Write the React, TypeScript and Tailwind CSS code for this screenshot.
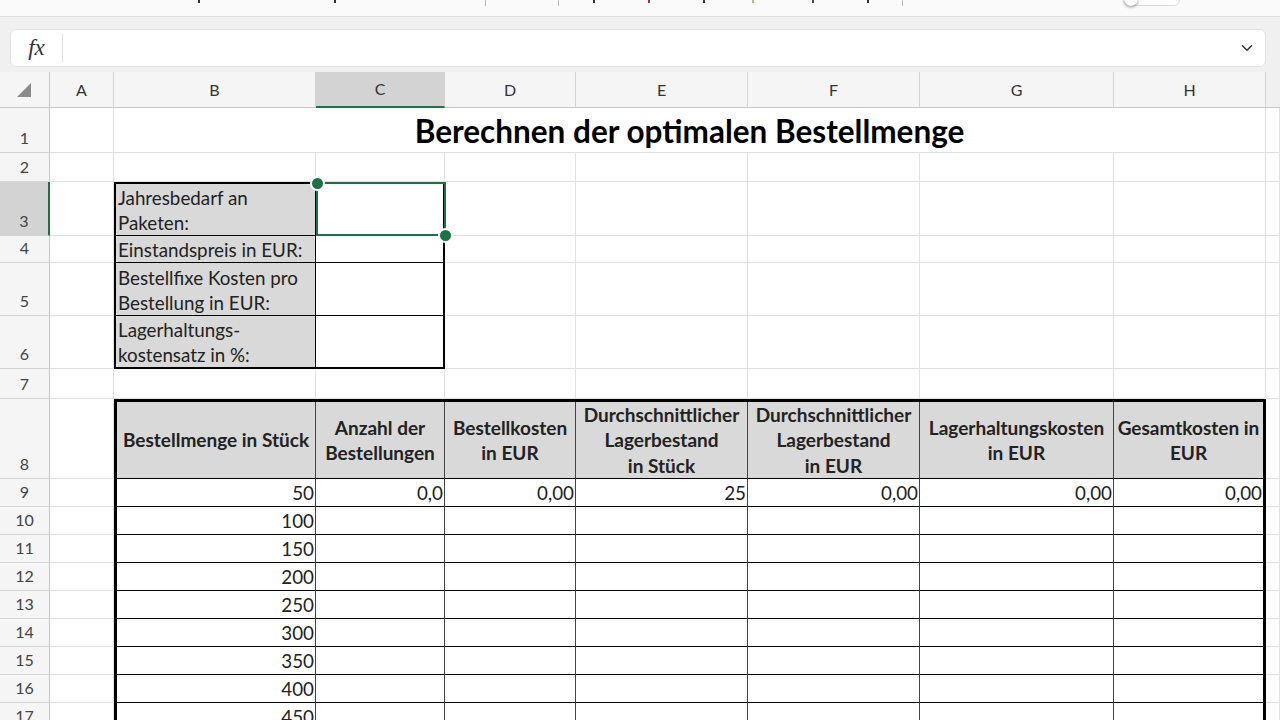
import { ChevronDown } from 'lucide-react';

const font = { fontFamily: 'Lato, "Open Sans", "Liberation Sans", sans-serif' };

const letters = ['A', 'B', 'C', 'D', 'E', 'F', 'G', 'H'];
const mengen = [50, 100, 150, 200, 250, 300, 350, 400, 450, 500, 550, 600];

const headers = [
  ['Bestellmenge in Stück'],
  ['Anzahl der', 'Bestellungen'],
  ['Bestellkosten', 'in EUR'],
  ['Durchschnittlicher', 'Lagerbestand', 'in Stück'],
  ['Durchschnittlicher', 'Lagerbestand', 'in EUR'],
  ['Lagerhaltungskosten', 'in EUR'],
  ['Gesamtkosten in', 'EUR'],
];

function RowHead({ n, active }: { n: number; active?: boolean }) {
  return (
    <div
      className={`flex items-end justify-center pb-[2px] text-[16px] text-[#444] border-b border-[#d4d4d4] ${
        active ? 'bg-[#d3d3d3] border-r-2 border-r-[#1e7145]' : 'bg-[#f5f5f5] border-r border-r-[#c8c8c8]'
      }`}
    >
      {n}
    </div>
  );
}

function Cell() {
  return <div className="border-r border-b border-[#e1e1e1] bg-white" />;
}

function Cells({ count }: { count: number }) {
  return (
    <>
      {Array.from({ length: count }).map((_, i) => (
        <Cell key={i} />
      ))}
    </>
  );
}

function InputBlock() {
  const labels = [
    ['Jahresbedarf an', 'Paketen:'],
    ['Einstandspreis in EUR:'],
    ['Bestellfixe Kosten pro', 'Bestellung in EUR:'],
    ['Lagerhaltungs-', 'kostensatz in %:'],
  ];
  return (
    <div className="row-span-4 col-span-2 border-2 border-black bg-white grid grid-cols-[200px_1fr] grid-rows-[52px_27px_53px_51px] text-[18.8px] text-[#222] leading-[25px]">
      {labels.map((l, i) => (
        <div key={i} className="contents">
          <div
            className={`bg-[#d9d9d9] border-r border-black pl-[2px] flex flex-col justify-end ${
              i < 3 ? 'border-b' : ''
            }`}
          >
            {l.map((t) => (
              <span key={t} className="whitespace-nowrap">
                {t}
              </span>
            ))}
          </div>
          <div className={`relative ${i < 3 ? 'border-b border-black' : ''}`}>
            {i === 0 && (
              <div className="absolute left-0 top-[-2px] right-[-3px] bottom-[-1px] border-2 border-[#1e7145]">
                <span className="absolute -left-[8.5px] -top-[8.5px] w-[15px] h-[15px] rounded-full bg-[#1e7145] border-2 border-white" />
                <span className="absolute -right-[8.5px] -bottom-[8.5px] w-[15px] h-[15px] rounded-full bg-[#1e7145] border-2 border-white" />
              </div>
            )}
          </div>
        </div>
      ))}
    </div>
  );
}

function MainTable() {
  const first = ['50', '0,0', '0,00', '25', '0,00', '0,00', '0,00'];
  return (
    <div className="row-span-13 col-span-7 border-[3px] border-b-0 border-black bg-white grid grid-cols-[199px_129px_131px_172px_172px_194px_1fr] grid-rows-[77px_repeat(12,28px)] text-[18.8px] text-[#222]">
      {headers.map((h, i) => (
        <div
          key={i}
          className={`bg-[#d9d9d9] border-b border-black flex flex-col items-center justify-center font-bold text-[19px] leading-[25.5px] text-center ${
            i < 6 ? 'border-r border-r-[#444]' : ''
          }`}
        >
          {h.map((t) => (
            <span key={t} className="whitespace-nowrap">
              {t}
            </span>
          ))}
        </div>
      ))}
      {mengen.map((m, r) =>
        Array.from({ length: 7 }).map((_, c) => (
          <div
            key={`${r}-${c}`}
            className={`border-b border-black flex items-end justify-end pr-[1px] pb-[1px] leading-[24px] ${
              c < 6 ? 'border-r border-r-[#444]' : ''
            }`}
          >
            {c === 0 ? m : r === 0 ? first[c] : ''}
          </div>
        ))
      )}
    </div>
  );
}

export default function App() {
  return (
    <div className="h-screen w-full overflow-hidden bg-white" style={font}>
      {/* toolbar rest */}
      <div className="h-[17px] bg-[#fafafa] border-b border-[#dedede] relative">
        <span className="absolute left-[198px] top-0 w-[2px] h-[3px] bg-[#333]" />
        <span className="absolute left-[334px] top-0 w-[2px] h-[3px] bg-[#333]" />
        <span className="absolute left-[485px] top-0 w-px h-[6px] bg-[#bbb]" />
        <span className="absolute left-[558px] top-0 w-px h-[6px] bg-[#bbb]" />
        <span className="absolute left-[593px] top-0 w-[2px] h-[3px] bg-[#333]" />
        <span className="absolute left-[648px] top-0 w-[2px] h-[3px] bg-[#a33]" />
        <span className="absolute left-[703px] top-0 w-[2px] h-[3px] bg-[#333]" />
        <span className="absolute left-[752px] top-0 w-[2px] h-[3px] bg-[#bb5]" />
        <span className="absolute left-[812px] top-0 w-[2px] h-[3px] bg-[#355]" />
        <span className="absolute left-[867px] top-0 w-[2px] h-[3px] bg-[#333]" />
        <span className="absolute left-[902px] top-0 w-px h-[6px] bg-[#bbb]" />
        <span className="absolute left-[1124px] -top-[6px] w-[56px] h-[12px] rounded-full border border-[#ddd] bg-white" />
        <span className="absolute left-[1124px] -top-[8px] w-[14px] h-[14px] rounded-full bg-white shadow-[0_1px_3px_rgba(0,0,0,0.45)]" />
      </div>

      {/* formula bar */}
      <div className="bg-[#f0f0f0] pt-[12px] pb-[4px] px-[10px] h-[55px]">
        <div className="h-[38px] w-[1256px] bg-white rounded-[6px] border border-[#e2e2e2] flex items-center">
          <div className="w-[52px] flex items-center justify-center border-r border-[#e4e4e4] h-[28px]">
            <span className="italic text-[23px] text-[#333]" style={{ fontFamily: '"Liberation Serif", "DejaVu Serif", serif' }}>
              fx
            </span>
          </div>
          <div className="flex-1" />
          <ChevronDown className="w-[18px] h-[18px] text-[#333] mr-[9px]" strokeWidth={2} />
        </div>
      </div>

      {/* sheet */}
      <div className="grid grid-cols-[50px_64px_202px_129px_131px_172px_172px_194px_152px_1fr] grid-rows-[36px_45px_29px_54px_27px_53px_53px_30px_80px_repeat(12,28px)]">
        {/* column headers */}
        <div className="bg-[#f5f5f5] border-r border-b border-[#c8c8c8] flex items-end justify-end pr-[18px] pb-[10px]">
          <svg width="14" height="14" viewBox="0 0 14 14">
            <polygon points="14,0 14,14 0,14" fill="#8a8a8a" />
          </svg>
        </div>
        {letters.map((l) => (
          <div
            key={l}
            className={`flex items-center justify-center text-[16px] text-[#333] border-r border-[#d4d4d4] ${
              l === 'C'
                ? 'bg-[#d3d3d3] border-b-2 border-b-[#1e7145]'
                : 'bg-[#f5f5f5] border-b border-b-[#c8c8c8]'
            }`}
          >
            {l}
          </div>
        ))}
        <div className="bg-[#f0f0f0] border-b border-[#c8c8c8]" />

        {/* row 1 */}
        <RowHead n={1} />
        <Cell />
        <div className="col-span-7 border-r border-b border-[#e1e1e1] flex items-end justify-center pb-[1px] text-[31.5px] font-bold text-black leading-[40px]">
          Berechnen der optimalen Bestellmenge
        </div>
        <Cell />

        {/* row 2 */}
        <RowHead n={2} />
        <Cells count={9} />

        {/* row 3 */}
        <RowHead n={3} active />
        <Cell />
        <InputBlock />
        <Cells count={6} />

        {/* rows 4-6 */}
        {[4, 5, 6].map((n) => (
          <div key={n} className="contents">
            <RowHead n={n} />
            <Cell />
            <Cells count={6} />
          </div>
        ))}

        {/* row 7 */}
        <RowHead n={7} />
        <Cells count={9} />

        {/* row 8 */}
        <RowHead n={8} />
        <Cell />
        <MainTable />
        <Cell />

        {Array.from({ length: 12 }).map((_, i) => (
          <div key={i} className="contents">
            <RowHead n={9 + i} />
            <Cell />
            <Cell />
          </div>
        ))}
      </div>
    </div>
  );
}
